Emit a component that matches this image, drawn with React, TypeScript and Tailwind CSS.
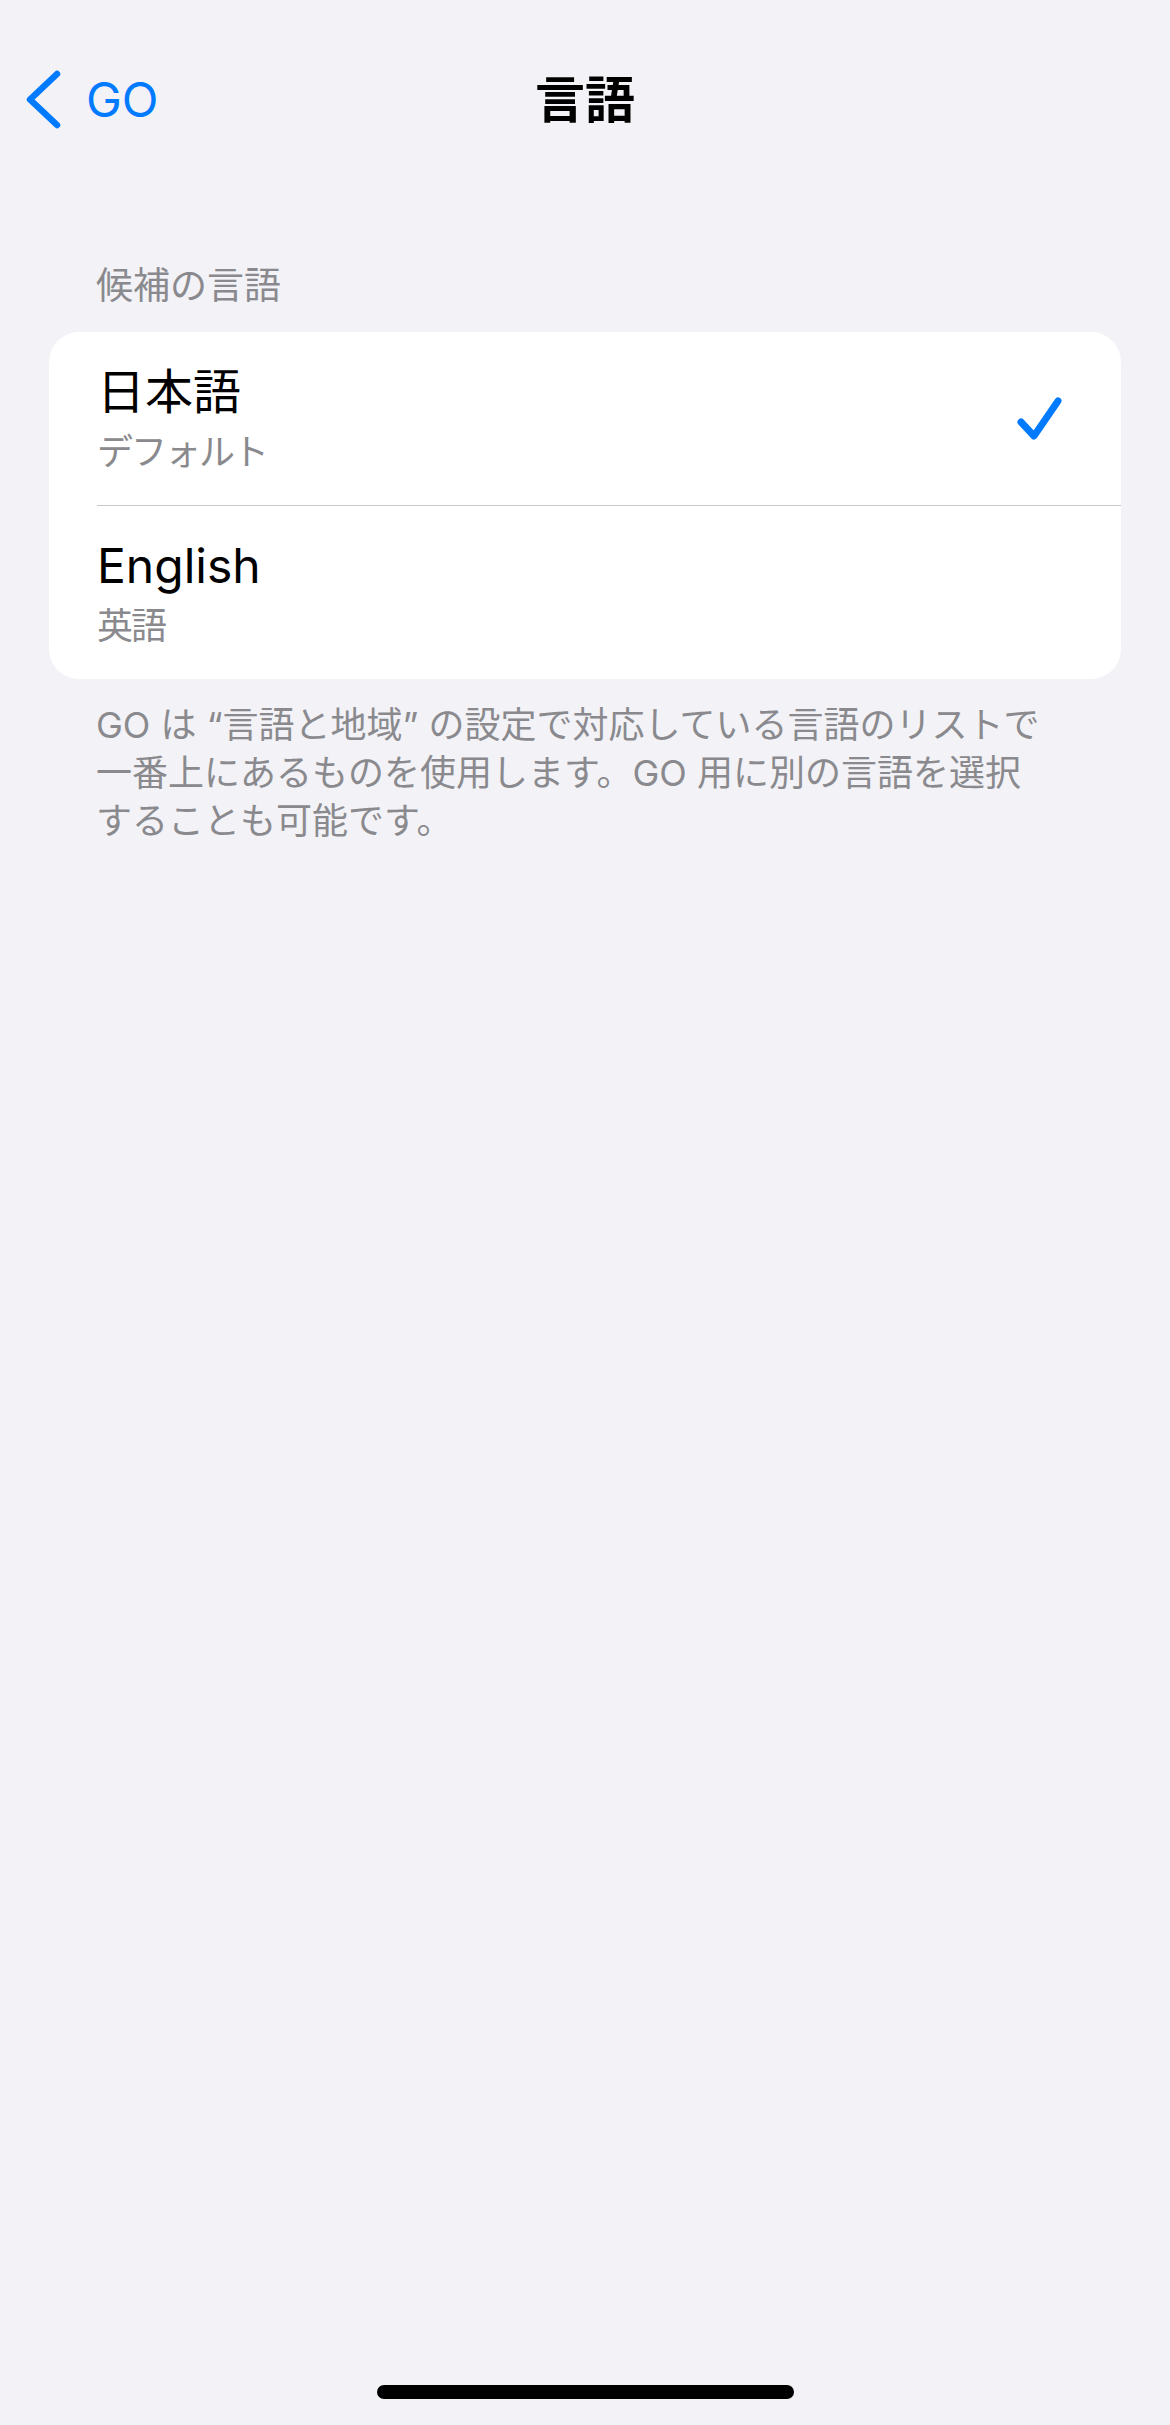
import React from "react";

type Language = {
  id: string;
  name: string;
  native: string;
  selected: boolean;
};

const languages: Language[] = [
  { id: "ja", name: "日本語", native: "デフォルト", selected: true },
  { id: "en", name: "English", native: "英語", selected: false },
];

function BackChevron() {
  return (
    <svg width="40" height="60" viewBox="0 0 40 60" fill="none">
      <path
        d="M33 4 L6 29.5 L33 55"
        stroke="#007aff"
        strokeWidth="6.5"
        strokeLinecap="round"
        strokeLinejoin="round"
      />
    </svg>
  );
}

function Checkmark() {
  return (
    <svg width="50" height="50" viewBox="0 0 50 50" fill="none">
      <path
        d="M8 28 L21 42 L45 7"
        stroke="#007aff"
        strokeWidth="7"
        strokeLinecap="round"
        strokeLinejoin="round"
      />
    </svg>
  );
}

export default function App() {
  return (
    <div className="flex h-[2425px] w-full flex-col bg-[#f2f2f7] font-['Inter','Noto_Sans_CJK_JP',sans-serif]">
      {/* nav bar */}
      <header className="mt-[56px] grid h-[88px] grid-cols-[1fr_auto_1fr] items-center">
        <button className="flex items-center gap-[22px] pl-[24px] text-[48px] leading-none text-[#007aff]">
          <BackChevron />
          <span>GO</span>
        </button>
        <h1 className="text-[50px] font-bold leading-none text-black">言語</h1>
        <div />
      </header>

      <section className="mt-[118px]">
        <p className="px-[96px] text-[37px] leading-[48px] text-[#8a8a8e]">
          候補の言語
        </p>

        <ul className="mx-[49px] mt-[22px] overflow-hidden rounded-[30px] bg-white">
          {languages.map((lang, i) => (
            <li key={lang.id} className="pl-[48px]">
              <div
                className={
                  i > 0
                    ? "flex h-[174px] items-center justify-between border-t border-[#c8c7cc] pr-[58px]"
                    : "flex h-[173px] items-center justify-between pr-[58px]"
                }
              >
                <div className="flex flex-col">
                  <span className="text-[48px] leading-[60px] text-black">
                    {lang.name}
                  </span>
                  <span className="mt-[6px] text-[36px] leading-[48px] tracking-[-2px] text-[#8a8a8e]">
                    {lang.native}
                  </span>
                </div>
                {lang.selected && <Checkmark />}
              </div>
            </li>
          ))}
        </ul>

        <p className="mt-[22px] px-[96px] text-[36px] leading-[48px] text-[#8a8a8e]">
          GO は “言語と地域” の設定で対応している言語のリストで
          <br />
          一番上にあるものを使用します。GO 用に別の言語を選択
          <br />
          することも可能です。
        </p>
      </section>

      {/* home indicator */}
      <div className="mt-auto mb-[26px] h-[14px] w-[417px] self-center rounded-full bg-black" />
    </div>
  );
}
